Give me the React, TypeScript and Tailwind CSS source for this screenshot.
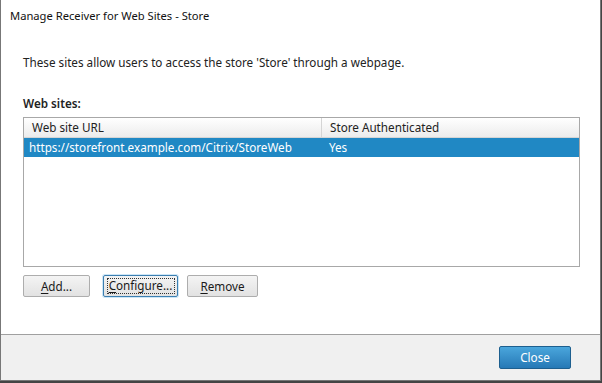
const font = "font-['Noto_Sans','Segoe_UI',sans-serif]";

function Btn({ u, rest, focused }: { u: string; rest: string; focused?: boolean }) {
  return (
    <button
      className={
        "w-full h-[22px] rounded-[2px] border text-[11.7px] text-[#1a1a1a] bg-gradient-to-b from-[#f4f4f4] to-[#e2e2e2] flex items-center justify-center " +
        (focused ? "border-[#3c7fb1] shadow-[0_0_0_1px_#cde6f7]" : "border-[#adadad]")
      }
    >
      <span
        className={
          focused
            ? "w-[68px] h-[16px] border border-dotted border-[#333] flex items-center justify-center"
            : "leading-[16px]"
        }
      >
        <span>
          <span className="underline underline-offset-2">{u}</span>
          {rest}
        </span>
      </span>
    </button>
  );
}

export default function App() {
  return (
    <div className={"w-[602px] h-[383px] bg-[#444] " + font}>
      <div className="w-[601px] h-[381px] flex flex-col bg-white border-l border-r border-b border-[#777]">
        <div className="h-[33px] flex items-center pl-[9px] text-[11.2px] text-[#111]">
          Manage Receiver for Web Sites - Store
        </div>

        <div className="flex-1 px-[22px] pt-[20px] flex flex-col">
          <div className="text-[11.7px] text-[#222] leading-[18px]">
            These sites allow users to access the store 'Store' through a webpage.
          </div>

          <div className="mt-[23px] text-[11.7px] font-semibold text-[#222] leading-[18px]">Web sites:</div>

          <div className="mt-[5px] w-[557px] h-[150px] border border-[#a8a8a8] bg-white flex flex-col">
            <div className="h-[20px] flex text-[11.7px] text-[#222] bg-gradient-to-b from-white to-[#ececec] border-b border-[#d5d5d5]">
              <div className="w-[298px] pl-[8px] flex items-center border-r border-[#d5d5d5]">Web site URL</div>
              <div className="flex-1 pl-[8px] flex items-center">Store Authenticated</div>
            </div>
            <div className="h-[19px] flex text-[11.7px] text-white bg-[#2088c4]">
              <div className="w-[298px] pl-[5px] flex items-center">https://storefront.example.com/Citrix/StoreWeb</div>
              <div className="flex-1 pl-[7px] flex items-center">Yes</div>
            </div>
          </div>

          <div className="mt-[8px] flex">
            <div className="w-[67px]"><Btn u="A" rest="dd..." /></div>
            <div className="w-[75px] ml-[13px]"><Btn u="C" rest="onfigure..." focused /></div>
            <div className="w-[71px] ml-[9px]"><Btn u="R" rest="emove" /></div>
          </div>
        </div>

        <div className="h-[46px] border-t border-[#a0a0a0] bg-[#f0f0f0] flex items-center justify-end pr-[29px]">
          <button className="w-[72px] h-[23px] rounded-[2px] border border-[#1d5f8f] bg-gradient-to-b from-[#4aa6dc] to-[#2679b6] text-white text-[11.7px]">
            Close
          </button>
        </div>
      </div>
    </div>
  );
}
